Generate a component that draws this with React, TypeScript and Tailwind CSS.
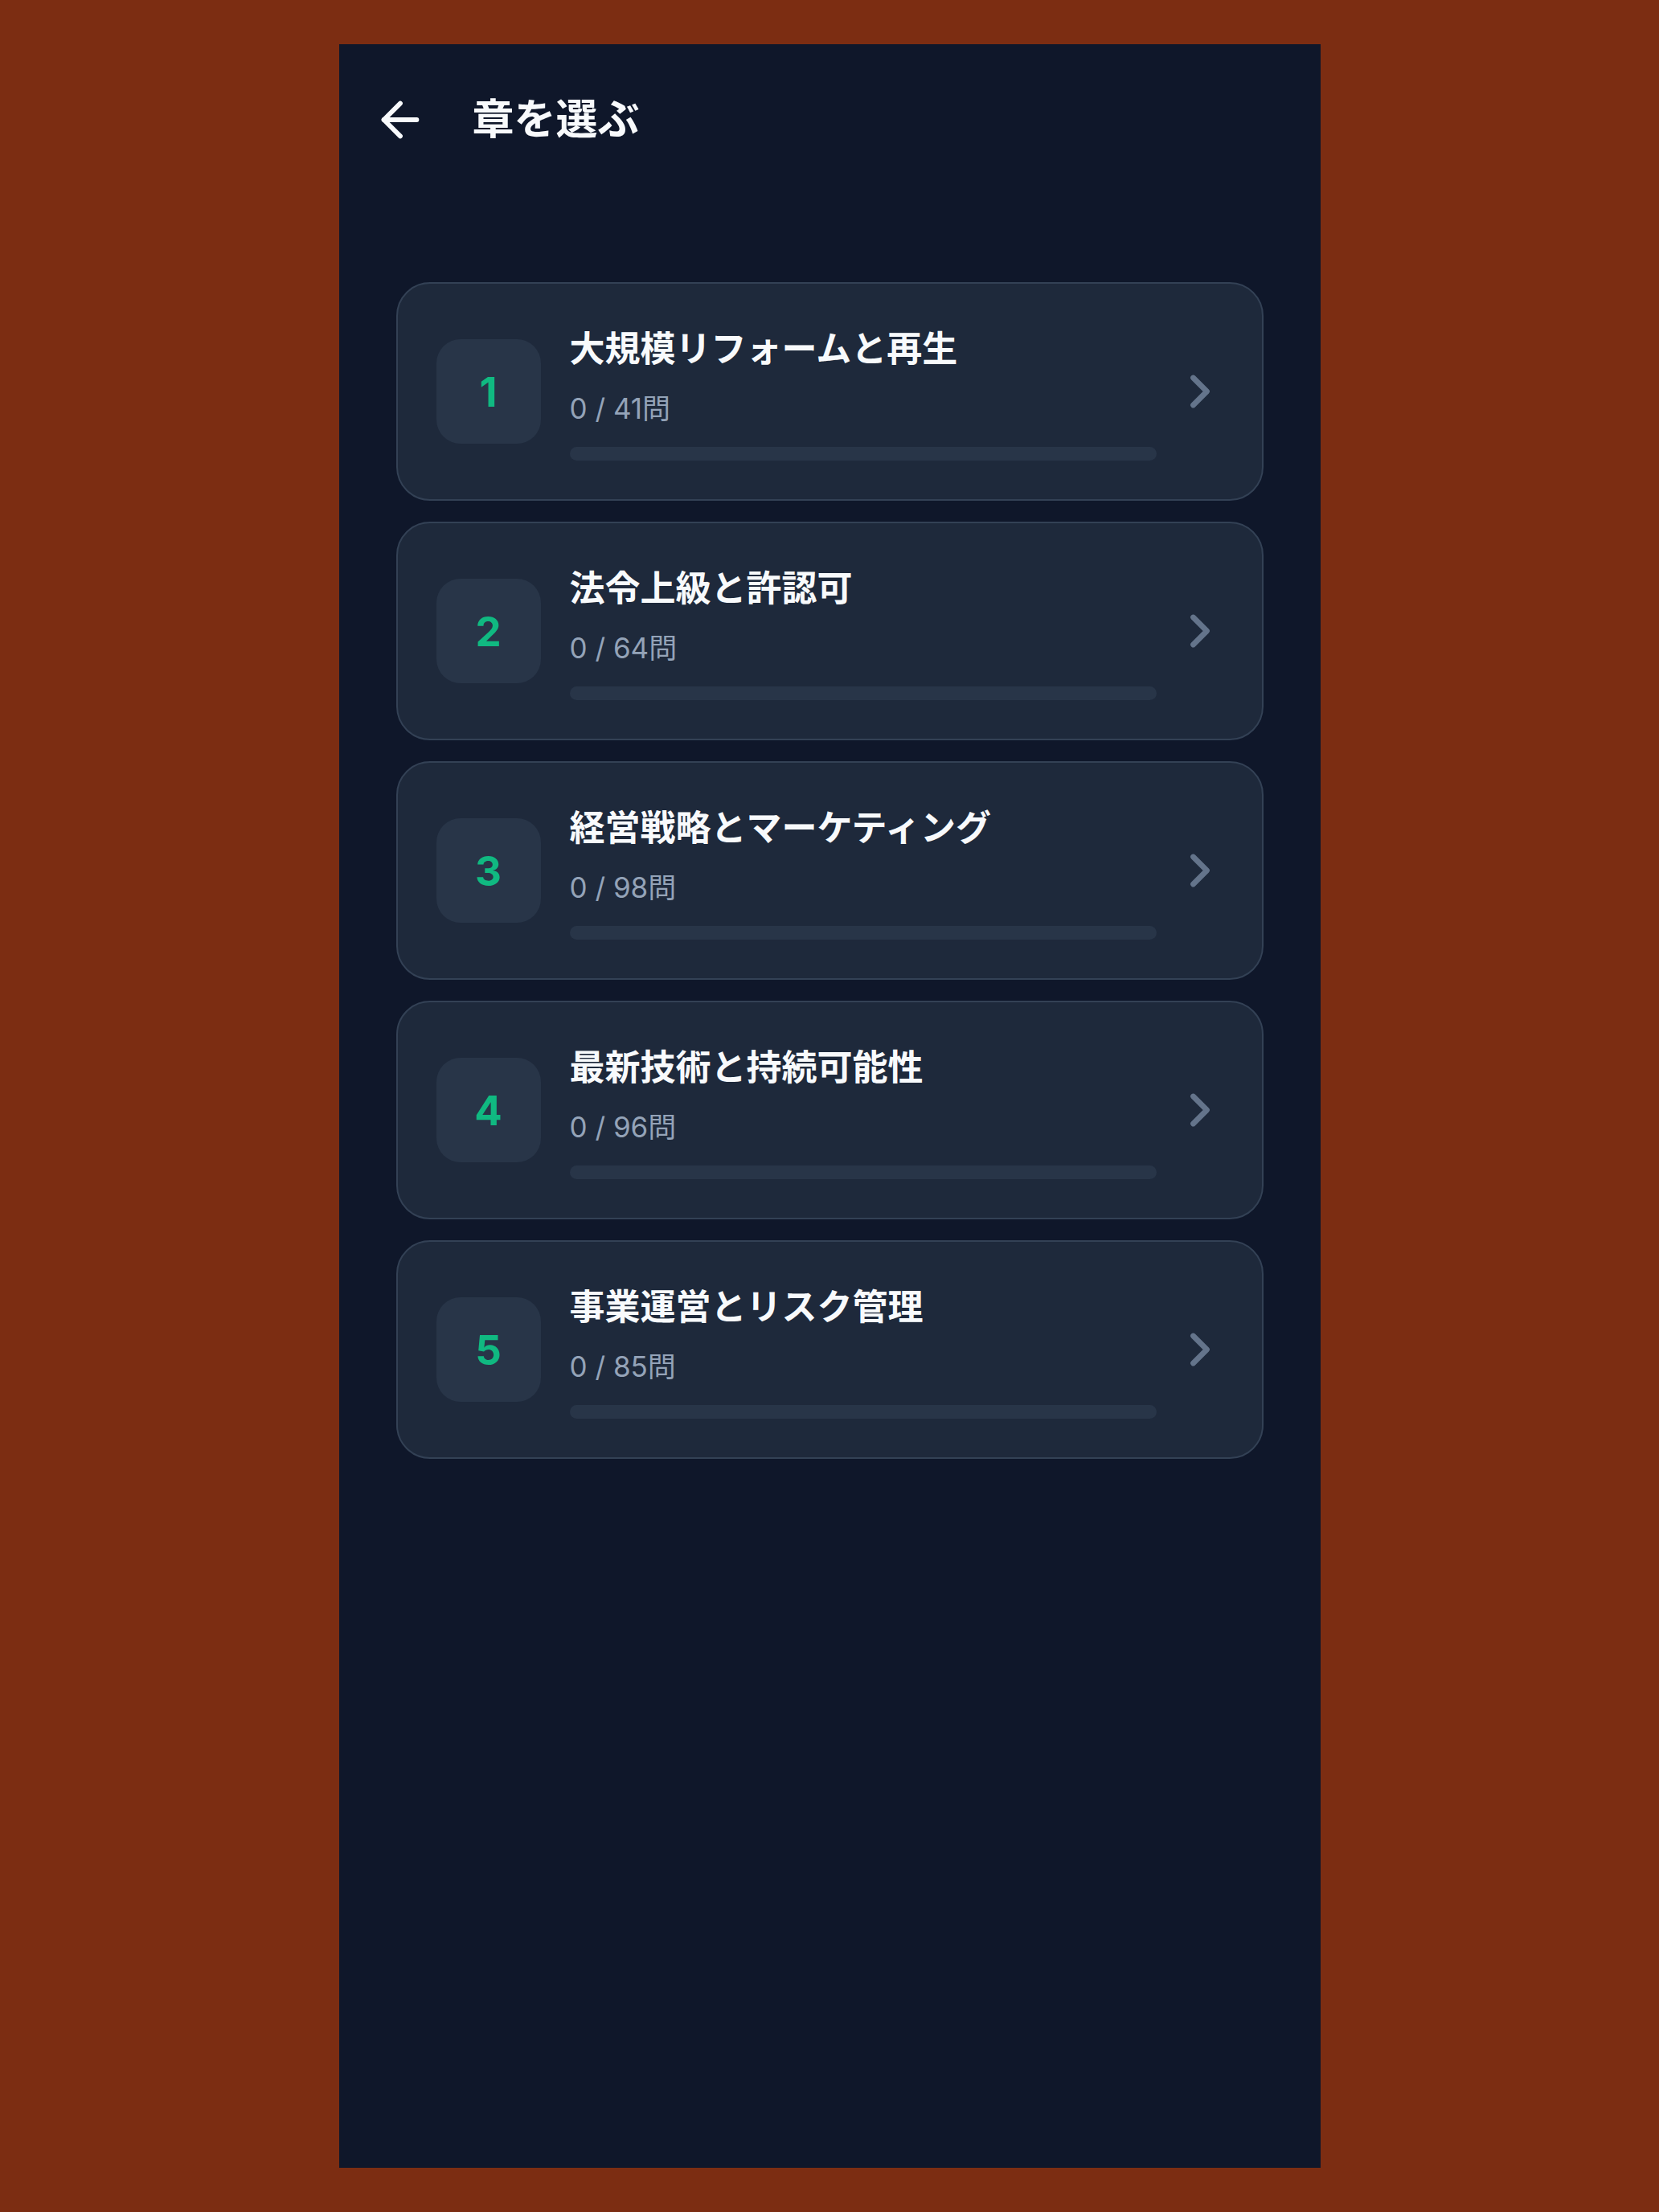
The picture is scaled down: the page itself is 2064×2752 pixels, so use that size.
import React from "react";

const chapters = [
  { n: 1, title: "大規模リフォームと再生", total: 41 },
  { n: 2, title: "法令上級と許認可", total: 64 },
  { n: 3, title: "経営戦略とマーケティング", total: 98 },
  { n: 4, title: "最新技術と持続可能性", total: 96 },
  { n: 5, title: "事業運営とリスク管理", total: 85 },
];

const font = { fontFamily: '"Inter", "Noto Sans CJK JP", sans-serif' };

export default function App() {
  return (
    <div className="w-full min-h-[2752px] bg-[#7c2d12] flex justify-center pt-[55px]" style={font}>
      <div className="w-[1221px] h-[2642px] bg-[#0f172a] flex flex-col">
        <div className="flex items-center gap-[55px] pl-[41px] pt-[59px]">
          <svg width="70" height="70" viewBox="0 0 24 24" fill="none" stroke="#f8fafc" strokeWidth="2" strokeLinecap="round" strokeLinejoin="round">
            <path d="m12 19-7-7 7-7" />
            <path d="M19 12H5" />
          </svg>
          <h1 className="text-[52px] leading-[70px] font-bold text-[#f8fafc]">章を選ぶ</h1>
        </div>
        <div className="mt-[167px] px-[71px] flex flex-col gap-[26px]">
          {chapters.map((c) => (
            <div
              key={c.n}
              className="flex items-center border-2 border-[#334155] bg-[#1e293b] rounded-[42px] pl-[48px] pr-[43px] py-[48px]"
            >
              <div className="w-[130px] h-[130px] shrink-0 rounded-[30px] bg-[#283548] flex items-center justify-center">
                <span className="text-[51px] font-bold text-[#10b981] leading-none">{c.n}</span>
              </div>
              <div className="flex-1 ml-[36px] flex flex-col">
                <div className="pt-[5px] text-[44px] leading-[56px] font-bold text-[#f8fafc]">{c.title}</div>
                <div className="mt-[24px] text-[35px] leading-[44px] text-[#94a3b8]">0 / {c.total}問</div>
                <div className="mt-[26px] h-[17px] rounded-full bg-[#283548]" />
              </div>
              <svg className="ml-[20px] shrink-0" width="68" height="68" viewBox="0 0 24 24" fill="none" stroke="#64748b" strokeWidth="2.4" strokeLinecap="round" strokeLinejoin="round">
                <path d="m9 18 6-6-6-6" />
              </svg>
            </div>
          ))}
        </div>
      </div>
    </div>
  );
}
